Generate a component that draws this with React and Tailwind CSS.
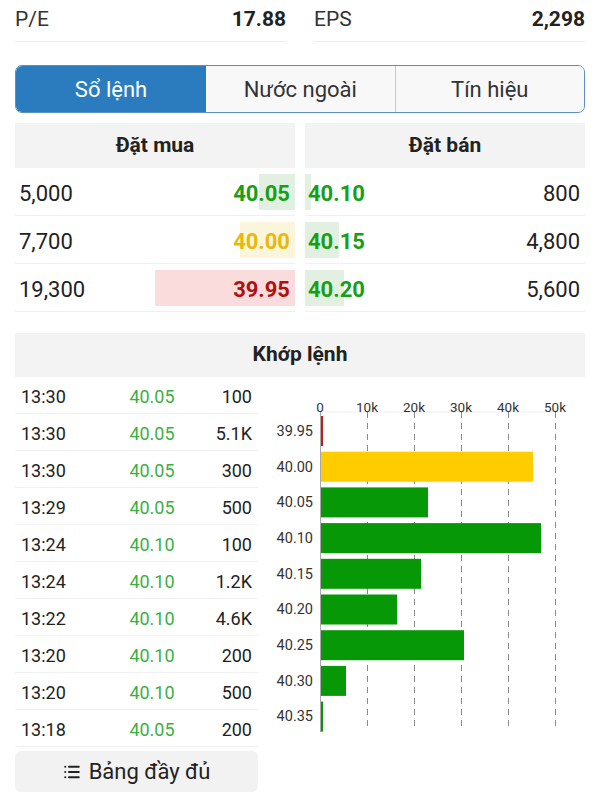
import React from 'react';
import { List } from 'lucide-react';

const bids = [
  { qty: '5,000', price: '40.05', color: 'text-[#16a016]', bar: 'bg-[#e2f0e2]', w: 36 },
  { qty: '7,700', price: '40.00', color: 'text-[#e9b80c]', bar: 'bg-[#fbf5dc]', w: 55 },
  { qty: '19,300', price: '39.95', color: 'text-[#b20f0f]', bar: 'bg-[#fadcdc]', w: 140 },
];

const asks = [
  { price: '40.10', qty: '800', w: 6 },
  { price: '40.15', qty: '4,800', w: 34 },
  { price: '40.20', qty: '5,600', w: 39 },
];

const trades = [
  ['13:30', '40.05', '100'],
  ['13:30', '40.05', '5.1K'],
  ['13:30', '40.05', '300'],
  ['13:29', '40.05', '500'],
  ['13:24', '40.10', '100'],
  ['13:24', '40.10', '1.2K'],
  ['13:22', '40.10', '4.6K'],
  ['13:20', '40.10', '200'],
  ['13:20', '40.10', '500'],
  ['13:18', '40.05', '200'],
];

const volumes = [
  { label: '39.95', w: 3, fill: '#c41a1a' },
  { label: '40.00', w: 213, fill: '#ffcc00' },
  { label: '40.05', w: 108, fill: '#079807' },
  { label: '40.10', w: 221, fill: '#079807' },
  { label: '40.15', w: 101, fill: '#079807' },
  { label: '40.20', w: 77, fill: '#079807' },
  { label: '40.25', w: 144, fill: '#079807' },
  { label: '40.30', w: 26, fill: '#079807' },
  { label: '40.35', w: 3, fill: '#079807' },
];

const Stat = ({ label, value }) => (
  <div className="flex-1 h-[42px] pt-[6px] flex justify-between border-b border-[#efefef] text-[21px] leading-[26px]">
    <span className="text-[#333]">{label}</span>
    <span className="font-bold text-[#222]">{value}</span>
  </div>
);

// Volume-by-price chart
const VolumeChart = () => {
  const x0 = 62;
  const ticks = ['0', '10k', '20k', '30k', '40k', '50k'];
  return (
    <svg width="327" height="370" className="block overflow-visible">
      <line x1={x0} y1="35" x2={x0 + 235} y2="35" stroke="#eeeeee" strokeWidth="1" />
      {ticks.map((t, i) => (
        <g key={t}>
          <text x={x0 + 47 * i} y="31" textAnchor="middle" dominantBaseline="middle" fontSize="13.5" fill="#333" fontFamily="Roboto">
            {t}
          </text>
          {i > 0 && (
            <line x1={x0 + 47 * i + 0.5} y1="35" x2={x0 + 47 * i + 0.5} y2="354" stroke="#8a8a8a" strokeWidth="1" strokeDasharray="6 5" />
          )}
        </g>
      ))}
      {volumes.map((v, i) => {
        const top = 39 + 35.7 * i;
        return (
          <g key={v.label}>
            <text x="55" y={top + 16} textAnchor="end" dominantBaseline="middle" fontSize="14.5" fill="#333" fontFamily="Roboto">
              {v.label}
            </text>
            <rect x={x0} y={top} width={v.w} height="30" fill={v.fill} />
          </g>
        );
      })}
      <line x1={x0 + 0.5} y1="35" x2={x0 + 0.5} y2="354" stroke="#a8a8a8" strokeWidth="1" />
    </svg>
  );
};

export default function App() {
  return (
    <div className="w-[600px] h-[800px] bg-white overflow-hidden font-['Roboto',sans-serif] text-[#222]">
      {/* P/E, EPS */}
      <div className="flex gap-[28px] px-[15px]">
        <Stat label="P/E" value="17.88" />
        <Stat label="EPS" value="2,298" />
      </div>

      {/* Tabs */}
      <div className="mx-[15px] mt-[23px] h-[48px] flex rounded-[7px] border border-[#5b8ec2] overflow-hidden text-[22px]">
        <div className="w-[190px] flex items-center justify-center bg-[#2b7cbf] text-white">Sổ lệnh</div>
        <div className="flex-1 flex items-center justify-center bg-[#f8f8f8] text-[#333]">Nước ngoài</div>
        <div className="flex-1 flex items-center justify-center bg-[#f8f8f8] text-[#333] border-l border-[#c9c9c9]">Tín hiệu</div>
      </div>

      {/* Order book */}
      <div className="mt-[10px] px-[15px] grid grid-cols-2 gap-[10px] text-[22px]">
        <div>
          <div className="h-[45px] bg-[#f3f3f3] flex items-center justify-center font-bold text-[21px]">Đặt mua</div>
          {bids.map((b) => (
            <div key={b.price} className="relative h-[48px] flex items-center justify-between pt-[3px] px-[4px] border-b border-[#f0f0f0]">
              <div className={`absolute right-0 top-[6px] bottom-[5px] ${b.bar}`} style={{ width: b.w }} />
              <span className="relative text-[#222]">{b.qty}</span>
              <span className={`relative font-bold pr-[1px] ${b.color}`}>{b.price}</span>
            </div>
          ))}
        </div>
        <div>
          <div className="h-[45px] bg-[#f3f3f3] flex items-center justify-center font-bold text-[21px]">Đặt bán</div>
          {asks.map((a) => (
            <div key={a.price} className="relative h-[48px] flex items-center justify-between pt-[3px] pl-[3px] pr-[5px] border-b border-[#f0f0f0]">
              <div className="absolute left-0 top-[6px] bottom-[5px] bg-[#e2f0e2]" style={{ width: a.w }} />
              <span className="relative font-bold text-[#16a016]">{a.price}</span>
              <span className="relative text-[#222]">{a.qty}</span>
            </div>
          ))}
        </div>
      </div>

      {/* Matched orders */}
      <div className="mx-[15px] mt-[21px] h-[44px] bg-[#f3f3f3] flex items-center justify-center font-bold text-[21px]">
        Khớp lệnh
      </div>
      <div className="flex px-[15px]">
        <div className="w-[243px]">
          {trades.map((t, i) => (
            <div key={i} className="h-[37px] grid grid-cols-[90px_94px_1fr] items-center pt-[3px] border-b border-[#f1f1f1] text-[18px]">
              <span className="pl-[6px] text-[#222]">{t[0]}</span>
              <span className="text-center text-[#3cb043]">{t[1]}</span>
              <span className="text-right pr-[6px] text-[#222]">{t[2]}</span>
            </div>
          ))}
          <button className="mt-[4px] w-full h-[41px] rounded-[6px] bg-[#f2f2f2] flex items-center justify-center gap-[8px] text-[22px] text-[#222]">
            <List size={18} strokeWidth={2.75} />
            <span>Bảng đầy đủ</span>
          </button>
        </div>
        <div className="flex-1">
          <VolumeChart />
        </div>
      </div>
    </div>
  );
}
